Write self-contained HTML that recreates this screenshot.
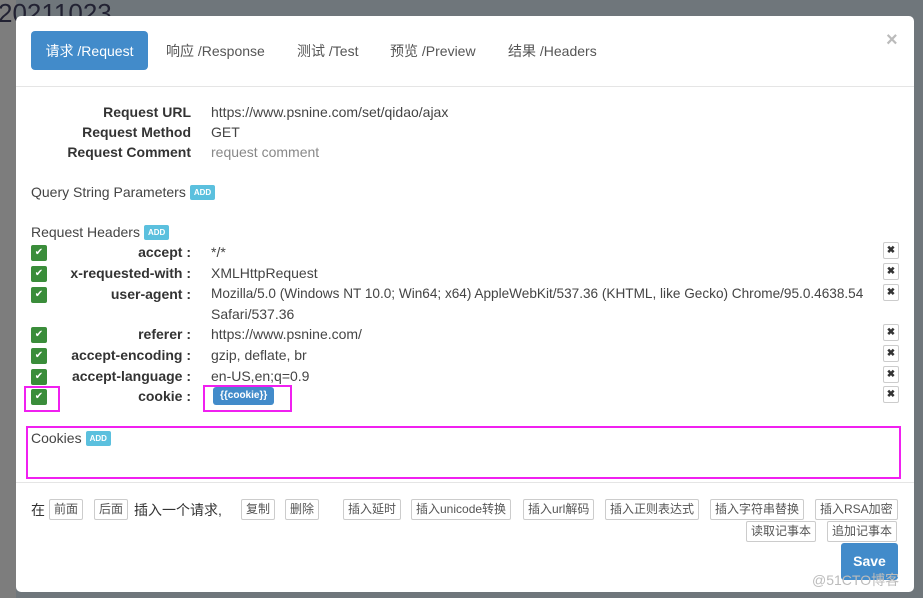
<!DOCTYPE html>
<html><head><meta charset="utf-8"><style>
*{box-sizing:border-box}
body{margin:0;width:923px;height:598px;overflow:hidden;background:#6f767b;font-family:"Liberation Sans","Noto Sans CJK SC",sans-serif;position:relative}
.bgl{position:absolute;left:0;top:0;width:16px;height:598px;background:#7d7d7d}
.bgt{position:absolute;left:0;top:0;font-size:26px;color:#223;left:-2px;top:-2px}
.modal{position:absolute;left:16px;top:16px;width:898px;height:576px;background:#fff;border-radius:5px;color:#333;font-size:14px}
.a{position:absolute;white-space:nowrap}
.tab{position:absolute;top:15px;height:39px;line-height:40px;font-size:14px;color:#555}
.act{left:15px;width:117px;background:#428bca;color:#fff;border-radius:4px;text-align:center}
.lbl{position:absolute;right:723px;font-weight:bold;text-align:right;white-space:nowrap}
.val{position:absolute;left:195px;white-space:nowrap;color:#444}
.add{display:inline-block;background:#5bc0de;color:#fff;font-size:8px;font-weight:bold;padding:3px 4px;border-radius:2px;vertical-align:2px;margin-left:4px;line-height:9px}
.cb{position:absolute;left:15px;width:16px;height:16px;background:#3a8d3a;border-radius:2px;color:#fff;font-size:10px;text-align:center;line-height:16px}
.x{position:absolute;left:867px;width:16px;height:17px;border:1px solid #ccc;border-radius:2px;font-size:10px;text-align:center;line-height:15px;color:#333;font-weight:bold}
.btn{position:absolute;height:21px;border:1px solid #ccc;border-radius:2px;font-size:12px;line-height:19px;padding:0 4px;color:#555;background:#fff;white-space:nowrap}
.mg{position:absolute;border:2px solid #f020f0}
</style></head><body>
<div class="bgl"></div>
<div class="bgt">20211023</div>
<div class="modal">
<div class="tab act">请求 /Request</div>
<div class="tab" style="left:150px">响应 /Response</div>
<div class="tab" style="left:281px">测试 /Test</div>
<div class="tab" style="left:374px">预览 /Preview</div>
<div class="tab" style="left:492px">结果 /Headers</div>
<div class="a" style="left:870px;top:13px;font-size:20px;color:#bbb;font-weight:bold">×</div>
<div class="a" style="left:0;top:70px;width:898px;border-top:1px solid #e5e5e5"></div>

<div class="lbl" style="top:88px">Request URL</div><div class="val" style="top:88px">https://www.psnine.com/set/qidao/ajax</div>
<div class="lbl" style="top:108px">Request Method</div><div class="val" style="top:108px">GET</div>
<div class="lbl" style="top:128px">Request Comment</div><div class="val" style="top:128px;color:#888">request comment</div>
<div class="a" style="left:15px;top:168px;color:#444">Query String Parameters<span class="add">ADD</span></div>
<div class="a" style="left:15px;top:208px;color:#444">Request Headers<span class="add">ADD</span></div>

<div class="cb" style="top:229px">✔</div><div class="lbl" style="top:228px">accept :</div><div class="val" style="top:228px">*/*</div><div class="x" style="top:226px">✖</div>
<div class="cb" style="top:250px">✔</div><div class="lbl" style="top:249px">x-requested-with :</div><div class="val" style="top:249px">XMLHttpRequest</div><div class="x" style="top:247px">✖</div>
<div class="cb" style="top:271px">✔</div><div class="lbl" style="top:270px">user-agent :</div><div class="val" style="top:270px;font-size:13.6px">Mozilla/5.0 (Windows NT 10.0; Win64; x64) AppleWebKit/537.36 (KHTML, like Gecko) Chrome/95.0.4638.54</div><div class="val" style="top:290px">Safari/537.36</div><div class="x" style="top:268px">✖</div>
<div class="cb" style="top:311px">✔</div><div class="lbl" style="top:310px">referer :</div><div class="val" style="top:310px">https://www.psnine.com/</div><div class="x" style="top:308px">✖</div>
<div class="cb" style="top:332px">✔</div><div class="lbl" style="top:331px">accept-encoding :</div><div class="val" style="top:331px">gzip, deflate, br</div><div class="x" style="top:329px">✖</div>
<div class="cb" style="top:353px">✔</div><div class="lbl" style="top:352px">accept-language :</div><div class="val" style="top:352px">en-US,en;q=0.9</div><div class="x" style="top:350px">✖</div>
<div class="cb" style="top:373px">✔</div><div class="lbl" style="top:372px">cookie :</div><div class="x" style="top:370px">✖</div>
<div class="a" style="left:197px;top:371px;background:#428bca;color:#fff;font-size:10px;font-weight:bold;padding:3px 7px;border-radius:3px;line-height:12px">{{cookie}}</div>
<div class="mg" style="left:8px;top:370px;width:36px;height:26px"></div>
<div class="mg" style="left:187px;top:369px;width:89px;height:27px"></div>
<div class="a" style="left:15px;top:414px;color:#444">Cookies<span class="add">ADD</span></div>
<div class="mg" style="left:10px;top:410px;width:875px;height:53px"></div>
<div class="a" style="left:0;top:466px;width:898px;border-top:1px solid #e5e5e5"></div>

<div class="a" style="left:15px;top:484px">在</div>
<div class="btn" style="left:33px;top:483px">前面</div>
<div class="btn" style="left:78px;top:483px">后面</div>
<div class="a" style="left:118px;top:484px">插入一个请求,</div>
<div class="btn" style="left:225px;top:483px">复制</div>
<div class="btn" style="left:269px;top:483px">删除</div>
<div class="btn" style="left:327px;top:483px">插入延时</div>
<div class="btn" style="left:395px;top:483px">插入unicode转换</div>
<div class="btn" style="left:507px;top:483px">插入url解码</div>
<div class="btn" style="left:589px;top:483px">插入正则表达式</div>
<div class="btn" style="left:694px;top:483px">插入字符串替换</div>
<div class="btn" style="left:799px;top:483px">插入RSA加密</div>
<div class="btn" style="left:730px;top:505px">读取记事本</div>
<div class="btn" style="left:811px;top:505px">追加记事本</div>
<div class="a" style="left:825px;top:527px;width:57px;height:37px;background:#428bca;color:#fff;border-radius:3px;text-align:center;line-height:37px;font-weight:bold">Save</div>
<div class="a" style="left:796px;top:554px;color:#bbb;font-size:14px">@51CTO博客</div>
</div>
</body></html>
